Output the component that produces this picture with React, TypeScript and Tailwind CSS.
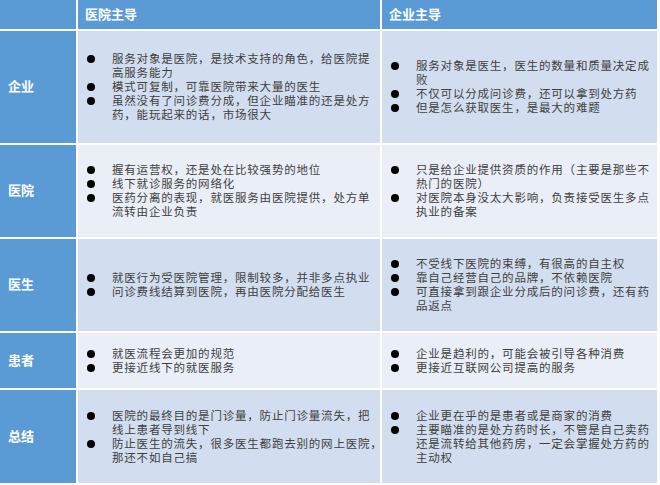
import React from "react";

type Row = {
  label: string;
  height: string;
  bg: string;
  hospital: string[][];
  company: string[][];
};

const rows: Row[] = [
  {
    label: "企业",
    height: "h-[112px]",
    bg: "bg-[#d2deef]",
    hospital: [
      ["服务对象是医院，是技术支持的角色，给医院提", "高服务能力"],
      ["模式可复制，可靠医院带来大量的医生"],
      ["虽然没有了问诊费分成，但企业瞄准的还是处方", "药，能玩起来的话，市场很大"],
    ],
    company: [
      ["服务对象是医生，医生的数量和质量决定成", "败"],
      ["不仅可以分成问诊费，还可以拿到处方药"],
      ["但是怎么获取医生，是最大的难题"],
    ],
  },
  {
    label: "医院",
    height: "h-[92px]",
    bg: "bg-[#eaeff7]",
    hospital: [
      ["握有运营权，还是处在比较强势的地位"],
      ["线下就诊服务的网络化"],
      ["医药分离的表现，就医服务由医院提供，处方单", "流转由企业负责"],
    ],
    company: [
      ["只是给企业提供资质的作用（主要是那些不", "热门的医院）"],
      ["对医院本身没太大影响，负责接受医生多点", "执业的备案"],
    ],
  },
  {
    label: "医生",
    height: "h-[92px]",
    bg: "bg-[#d2deef]",
    hospital: [
      ["就医行为受医院管理，限制较多，并非多点执业"],
      ["问诊费线结算到医院，再由医院分配给医生"],
    ],
    company: [
      ["不受线下医院的束缚，有很高的自主权"],
      ["靠自己经营自己的品牌，不依赖医院"],
      ["可直接拿到跟企业分成后的问诊费，还有药", "品返点"],
    ],
  },
  {
    label: "患者",
    height: "h-[55px]",
    bg: "bg-[#eaeff7]",
    hospital: [["就医流程会更加的规范"], ["更接近线下的就医服务"]],
    company: [["企业是趋利的，可能会被引导各种消费"], ["更接近互联网公司提高的服务"]],
  },
  {
    label: "总结",
    height: "h-[93px]",
    bg: "bg-[#d2deef]",
    hospital: [
      ["医院的最终目的是门诊量，防止门诊量流失，把", "线上患者导到线下"],
      ["防止医生的流失，很多医生都跑去别的网上医院，", "那还不如自己搞"],
    ],
    company: [
      ["企业更在乎的是患者或是商家的消费"],
      ["主要瞄准的是处方药时长，不管是自己卖药", "还是流转给其他药房，一定会掌握处方药的", "主动权"],
    ],
  },
];

function Bullets({ items }: { items: string[][] }) {
  return (
    <div className="flex flex-col pl-[7px] text-[11.5px] leading-[14px] tracking-[0.8px] text-[#404040]">
      {items.map((lines, i) => (
        <div key={i} className="flex">
          <div className="w-[27px] h-[14px] flex items-center shrink-0">
            <span className="ml-[2px] w-[8px] h-[8px] rounded-full bg-black" />
          </div>
          <div>
            {lines.map((line, j) => (
              <div key={j} className="whitespace-nowrap">
                {line}
              </div>
            ))}
          </div>
        </div>
      ))}
    </div>
  );
}

export default function App() {
  return (
    <div
      className="w-[660px] h-[485px] bg-white"
      style={{ fontFamily: '"Liberation Sans", "Noto Sans CJK SC", sans-serif' }}
    >
      <div className="w-[657px] grid grid-cols-[76px_302px_275px] gap-[2px]">
        <div className="h-[29px] bg-[#5b9bd5]" />
        <div className="h-[29px] bg-[#5b9bd5] flex items-center pl-[7px] text-[13px] font-bold text-white">
          医院主导
        </div>
        <div className="h-[29px] bg-[#5b9bd5] flex items-center pl-[7px] text-[13px] font-bold text-white">
          企业主导
        </div>

        {rows.map((row) => (
          <React.Fragment key={row.label}>
            <div
              className={`${row.height} bg-[#5b9bd5] flex items-center pl-[8px] text-[13px] font-bold text-white`}
            >
              {row.label}
            </div>
            <div className={`${row.height} ${row.bg} flex items-center`}>
              <Bullets items={row.hospital} />
            </div>
            <div className={`${row.height} ${row.bg} flex items-center`}>
              <Bullets items={row.company} />
            </div>
          </React.Fragment>
        ))}
      </div>
    </div>
  );
}
